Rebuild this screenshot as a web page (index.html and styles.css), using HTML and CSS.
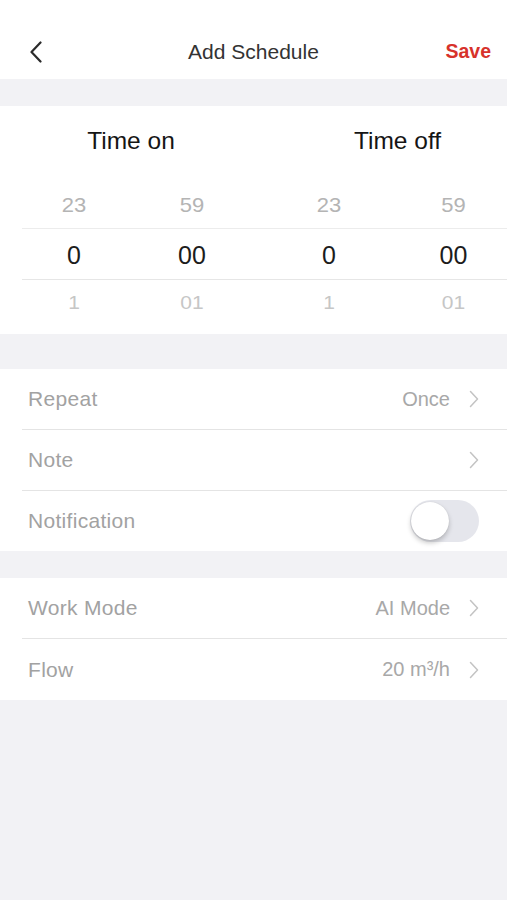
FILE: index.html
```html
<!DOCTYPE html>
<html>
<head>
<meta charset="utf-8">
<link rel="stylesheet" href="styles.css">
</head>
<body>
<header class="topbar">
  <div class="back">
    <svg width="14" height="22" viewBox="0 0 14 22"><path d="M11.5 1.5 L2.5 11 L11.5 20.5" fill="none" stroke="#2b2b2b" stroke-width="2.2" stroke-linecap="round" stroke-linejoin="round"/></svg>
  </div>
  <div class="title">Add Schedule</div>
  <div class="save">Save</div>
</header>

<section class="picker">
  <div class="picker-head">
    <div class="ph ph-on">Time on</div>
    <div class="ph ph-off">Time off</div>
  </div>
  <div class="wheel-row row-prev">
    <span>23</span><span>59</span><span>23</span><span>59</span>
  </div>
  <div class="wheel-row row-cur">
    <span>0</span><span>00</span><span>0</span><span>00</span>
  </div>
  <div class="wheel-row row-next">
    <span>1</span><span>01</span><span>1</span><span>01</span>
  </div>
</section>

<section class="group group-a">
  <div class="item">
    <span class="label">Repeat</span>
    <span class="value">Once</span>
    <svg class="chev" width="10" height="18" viewBox="0 0 10 18"><path d="M1.5 1.5 L8.5 9 L1.5 16.5" fill="none" stroke="#c3c3c3" stroke-width="1.5" stroke-linecap="round" stroke-linejoin="round"/></svg>
  </div>
  <div class="item">
    <span class="label">Note</span>
    <span class="value"></span>
    <svg class="chev" width="10" height="18" viewBox="0 0 10 18"><path d="M1.5 1.5 L8.5 9 L1.5 16.5" fill="none" stroke="#c3c3c3" stroke-width="1.5" stroke-linecap="round" stroke-linejoin="round"/></svg>
  </div>
  <div class="item last">
    <span class="label">Notification</span>
    <span class="toggle"><span class="knob"></span></span>
  </div>
</section>

<section class="group group-b">
  <div class="item">
    <span class="label">Work Mode</span>
    <span class="value">AI Mode</span>
    <svg class="chev" width="10" height="18" viewBox="0 0 10 18"><path d="M1.5 1.5 L8.5 9 L1.5 16.5" fill="none" stroke="#c3c3c3" stroke-width="1.5" stroke-linecap="round" stroke-linejoin="round"/></svg>
  </div>
  <div class="item last">
    <span class="label">Flow</span>
    <span class="value">20 m³/h</span>
    <svg class="chev" width="10" height="18" viewBox="0 0 10 18"><path d="M1.5 1.5 L8.5 9 L1.5 16.5" fill="none" stroke="#c3c3c3" stroke-width="1.5" stroke-linecap="round" stroke-linejoin="round"/></svg>
  </div>
</section>
</body>
</html>
```

FILE: styles.css
```css
html, body {
  margin: 0;
  padding: 0;
}
body {
  background: #f2f2f5;
  font-family: "Liberation Sans", Arial, sans-serif;
  width: 507px;
  min-height: 900px;
}

.topbar {
  height: 79px;
  background: #fff;
  display: grid;
  grid-template-columns: 1fr auto 1fr;
  align-items: center;
  padding: 24px 16px 0 16px;
  box-sizing: border-box;
}
.back {
  display: flex;
  align-items: center;
  padding-left: 13px;
  padding-top: 1px;
}
.title {
  font-size: 21px;
  color: #333;
}
.save {
  justify-self: end;
  font-size: 19.5px;
  font-weight: bold;
  color: #d7322b;
}

.picker {
  margin-top: 27px;
  background: #fff;
  height: 228px;
  padding-left: 22px;
  box-sizing: border-box;
}
.picker-head {
  display: grid;
  grid-template-columns: 218px 1fr;
  height: 70px;
  align-items: center;
  font-size: 24.5px;
  color: #151515;
}
.ph {
  text-align: center;
}
.ph-off {
  padding-left: 48px;
}
.wheel-row {
  display: grid;
  grid-template-columns: 104px 132px 142px 107px;
  justify-items: center;
  align-items: center;
}
.row-prev {
  height: 52px;
  padding-top: 8px;
  box-sizing: border-box;
  font-size: 22px;
  color: #b4b4b4;
}
.row-prev span, .row-next span {
  transform: scaleY(0.88);
}
.row-cur {
  height: 52px;
  border-top: 1px solid #ececec;
  border-bottom: 1px solid #e6e6e6;
  box-sizing: border-box;
  padding-top: 3px;
  font-size: 25px;
  color: #1c1c1c;
}
.row-next {
  height: 54px;
  padding-bottom: 8px;
  box-sizing: border-box;
  font-size: 21px;
  color: #c6c6c6;
}

.group {
  background: #fff;
}
.group-a {
  margin-top: 35px;
}
.group-b {
  margin-top: 27px;
}
.item {
  margin-left: 22px;
  padding: 0 28px 0 6px;
  height: 61px;
  display: flex;
  align-items: center;
  border-bottom: 1px solid #e4e4e4;
  box-sizing: border-box;
}
.item.last {
  border-bottom: none;
}
.group-a .item.last {
  height: 60px;
}
.label {
  font-size: 21px;
  letter-spacing: 0.3px;
  color: #a2a2a2;
  flex: 1;
}
.value {
  font-size: 20px;
  color: #a8a8a8;
  margin-right: 19px;
}
.chev {
  display: block;
}
.toggle {
  width: 69px;
  height: 42px;
  border-radius: 21px;
  background: #e5e6ec;
  position: relative;
  box-sizing: border-box;
}
.knob {
  position: absolute;
  left: 1px;
  top: 2px;
  width: 38px;
  height: 38px;
  border-radius: 50%;
  background: #fff;
  box-shadow: 0 3px 5px rgba(0,0,0,0.22), 0 0 1px rgba(0,0,0,0.15);
}
```
